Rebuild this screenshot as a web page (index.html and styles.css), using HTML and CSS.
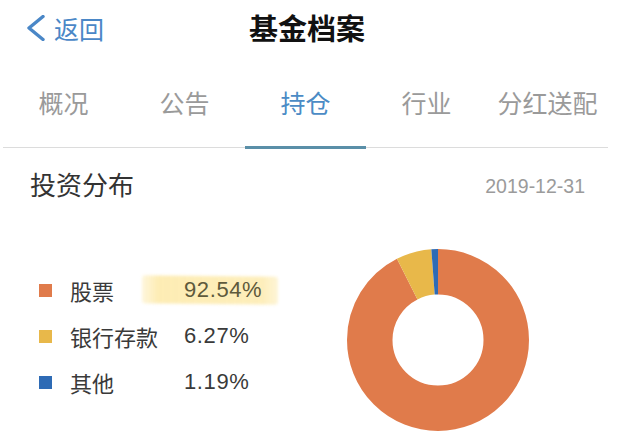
FILE: index.html
```html
<!DOCTYPE html>
<html lang="zh-CN">
<head>
<meta charset="utf-8">
<title>基金档案</title>
<link rel="stylesheet" href="styles.css">
</head>
<body>
<div class="page">
  <header class="nav">
    <div class="back">
      <svg class="chev" width="20" height="26" viewBox="0 0 20 26"><polyline points="17,1.5 3,13 17,24.5" fill="none" stroke="#4a87c7" stroke-width="3.4" stroke-linecap="round" stroke-linejoin="round"/></svg>
      <span class="back-text">返回</span>
    </div>
    <h1 class="title">基金档案</h1>
  </header>

  <nav class="tabs">
    <div class="tab">概况</div>
    <div class="tab">公告</div>
    <div class="tab active">持仓</div>
    <div class="tab">行业</div>
    <div class="tab">分红送配</div>
  </nav>

  <section class="section">
    <div class="section-head">
      <h2 class="section-title">投资分布</h2>
      <span class="date">2019-12-31</span>
    </div>
    <div class="chart-body">
      <ul class="legend">
        <li class="row"><span class="sw sw-orange"></span><span class="label">股票</span><span class="value marked">92.54%</span></li>
        <li class="row"><span class="sw sw-yellow"></span><span class="label">银行存款</span><span class="value">6.27%</span></li>
        <li class="row"><span class="sw sw-blue"></span><span class="label">其他</span><span class="value">1.19%</span></li>
      </ul>
      <svg class="donut" width="182" height="182" viewBox="0 0 182 182">
        <g transform="rotate(-90 91 91)" fill="none" stroke-width="45.5">
          <circle cx="91" cy="91" r="68.25" pathLength="100" stroke="#e07b4b" stroke-dasharray="92.54 200"/>
          <circle cx="91" cy="91" r="68.25" pathLength="100" stroke="#e8b84a" stroke-dasharray="6.27 200" stroke-dashoffset="-92.54"/>
          <circle cx="91" cy="91" r="68.25" pathLength="100" stroke="#2e6bb5" stroke-dasharray="1.19 200" stroke-dashoffset="-98.81"/>
        </g>
      </svg>
    </div>
  </section>
</div>
</body>
</html>
```

FILE: styles.css
```css
* { box-sizing: border-box; }
html, body { margin: 0; padding: 0; background: #fff; }
body {
  font-family: "Noto Sans CJK SC", "Liberation Sans", sans-serif;
  width: 617px;
  height: 433px;
  overflow: hidden;
}
.page { width: 617px; }

.nav {
  position: relative;
  height: 54px;
  display: flex;
  align-items: center;
  justify-content: center;
}
.back {
  position: absolute;
  left: 26px;
  top: 14px;
  display: flex;
  align-items: center;
  gap: 8px;
}
.chev { display: block; }
.back-text {
  font-size: 25px;
  line-height: 28px;
  color: #4a87c7;
}
.title {
  margin: 0;
  font-size: 29px;
  line-height: 32px;
  font-weight: 700;
  color: #111;
  padding-right: 3px;
}

.tabs {
  display: grid;
  grid-template-columns: repeat(5, 1fr);
  margin-left: 3px;
  width: 605px;
  border-bottom: 1px solid #dcdcdc;
  padding-top: 33px;
}
.tab {
  position: relative;
  text-align: center;
  font-size: 25px;
  line-height: 30px;
  color: #9a9a9a;
  padding-bottom: 30px;
}
.tab.active { color: #4b8bc5; }
.tab.active::after {
  content: "";
  position: absolute;
  left: 0;
  right: 0;
  bottom: -2px;
  height: 3px;
  background: #5a8fa8;
}

.section { padding: 20px 32px 0 30px; }
.section-head {
  display: flex;
  justify-content: space-between;
  align-items: center;
}
.section-title {
  margin: 0;
  font-size: 26px;
  line-height: 32px;
  font-weight: 400;
  color: #333;
}
.date {
  font-family: "Liberation Sans", sans-serif;
  font-size: 19.5px;
  color: #9b9b9b;
  padding-top: 4px;
}

.chart-body {
  display: grid;
  grid-template-columns: 308px 182px;
  margin-top: 49px;
  margin-left: 9px;
}
.legend {
  list-style: none;
  margin: 0;
  padding: 18px 0 0 0;
}
.row {
  display: flex;
  align-items: center;
  height: 46px;
}
.sw {
  width: 13px;
  height: 13px;
  flex: none;
  margin-right: 18px;
}
.sw-orange { background: #e07b4b; }
.sw-yellow { background: #e8b84a; }
.sw-blue { background: #2e6bb5; }
.label {
  width: 114px;
  font-size: 22px;
  color: #3a3a3a;
}
.value {
  position: relative;
  z-index: 0;
  font-family: "Liberation Sans", sans-serif;
  font-size: 22px;
  letter-spacing: 0.6px;
  color: #3a3a3a;
}
.value.marked { color: #5e5a3c; }
.value.marked::before {
  content: "";
  position: absolute;
  left: -42px;
  width: 136px;
  top: -1px;
  height: 28px;
  z-index: -1;
  background: linear-gradient(90deg, rgba(252,226,140,0.3), rgba(252,226,140,0.65) 12%, rgba(252,226,140,0.6) 88%, rgba(252,226,140,0.35));
  border-radius: 3px;
  filter: blur(1.5px);
  transform: skewY(0.6deg);
}
.donut { display: block; }
```
